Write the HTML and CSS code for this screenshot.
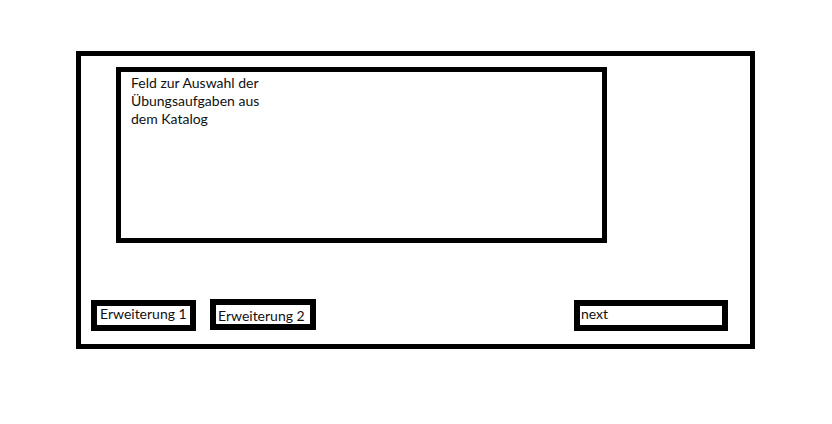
FILE: index.html
```html
<!DOCTYPE html>
<html lang="de">
<head>
    <meta charset="UTF-8">
    <title>Übungsaufgaben</title>
    <link rel="stylesheet" href="styles.css">
</head>
<body>
    <div class="frame">
        <div class="catalog">
            <p class="catalog-text">Feld zur Auswahl der<br>Übungsaufgaben aus<br>dem Katalog</p>
        </div>
        <div class="actions">
            <div class="btn btn-ext1">Erweiterung 1</div>
            <div class="btn btn-ext2">Erweiterung 2</div>
            <div class="btn btn-next">next</div>
        </div>
    </div>
</body>
</html>
```

FILE: styles.css
```css
body {
    margin: 0;
    background: #fff;
    font-family: Lato, 'Open Sans', Arial, sans-serif;
    font-size: 14px;
    color: #111;
}
.frame {
    box-sizing: border-box;
    width: 679px;
    height: 298px;
    margin: 51px 0 0 76px;
    border: 5px solid #000;
    padding-top: 11px;
    display: flex;
    flex-direction: column;
}
.catalog {
    box-sizing: border-box;
    width: 491px;
    height: 176px;
    margin-left: 35px;
    border: 5px solid #000;
    padding: 2px 10px;
}
.catalog-text {
    margin: 0;
    line-height: 18px;
}
.actions {
    display: flex;
    align-items: flex-start;
    margin-top: 57px;
    padding-left: 10px;
    padding-right: 22px;
}
.btn {
    box-sizing: border-box;
    height: 31px;
    border: 6px solid #000;
    padding-left: 3px;
    line-height: 16px;
    white-space: nowrap;
}
.btn-ext1 { width: 105px; }
.btn-ext2 {
    width: 106px;
    margin-left: 14px;
    margin-top: -1px;
    padding-left: 2px;
    padding-top: 3px;
}
.btn-next {
    width: 154px;
    margin-left: auto;
    padding-left: 1px;
}
```
